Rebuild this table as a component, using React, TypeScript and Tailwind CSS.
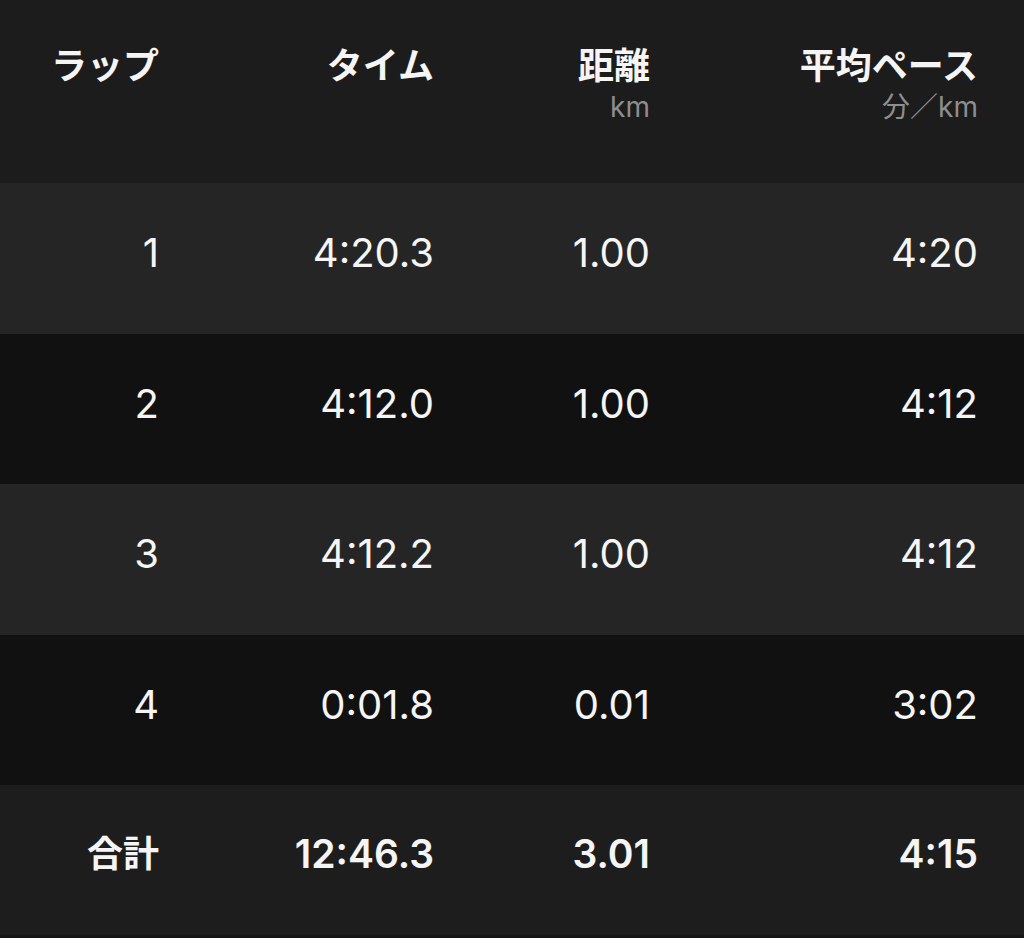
import React from "react";

const rows = [
  { lap: "1", time: "4:20.3", dist: "1.00", pace: "4:20", bg: "bg-[#252525]" },
  { lap: "2", time: "4:12.0", dist: "1.00", pace: "4:12", bg: "bg-[#111111]" },
  { lap: "3", time: "4:12.2", dist: "1.00", pace: "4:12", bg: "bg-[#252525]" },
  { lap: "4", time: "0:01.8", dist: "0.01", pace: "3:02", bg: "bg-[#111111]" },
];

const grid = "grid grid-cols-[159px_275px_216px_328px] pr-[46px]";
const font = { fontFamily: 'Inter, "Noto Sans CJK JP", sans-serif' };

export default function App() {
  return (
    <div className="w-[1024px] h-[938px] bg-[#141414] text-[#f5f5f5] flex flex-col" style={font}>
      <div className={`${grid} h-[183px] bg-[#1c1c1c] pt-[42px] text-right`}>
        <div className="text-[36px] font-bold leading-[48px]">ラップ</div>
        <div className="text-[36px] font-bold leading-[48px]">タイム</div>
        <div className="flex flex-col items-end">
          <div className="text-[36px] font-bold leading-[48px]">距離</div>
          <div className="text-[28px] leading-[34px] text-[#8e8e8e]">km</div>
        </div>
        <div className="flex flex-col items-end">
          <div className="text-[36px] font-bold leading-[48px]">平均ペース</div>
          <div className="text-[28px] leading-[34px] text-[#8e8e8e]">分／km</div>
        </div>
      </div>
      {rows.map((r) => (
        <div key={r.lap} className={`${grid} h-[150.5px] ${r.bg} items-center text-right text-[40px] pb-[10px]`}>
          <div>{r.lap}</div>
          <div>{r.time}</div>
          <div>{r.dist}</div>
          <div>{r.pace}</div>
        </div>
      ))}
      <div className={`${grid} h-[150px] bg-[#1d1d1d] items-center text-right text-[39px] font-semibold pb-[12px]`}>
        <div className="text-[36px] font-bold">合計</div>
        <div>12:46.3</div>
        <div>3.01</div>
        <div>4:15</div>
      </div>
    </div>
  );
}
